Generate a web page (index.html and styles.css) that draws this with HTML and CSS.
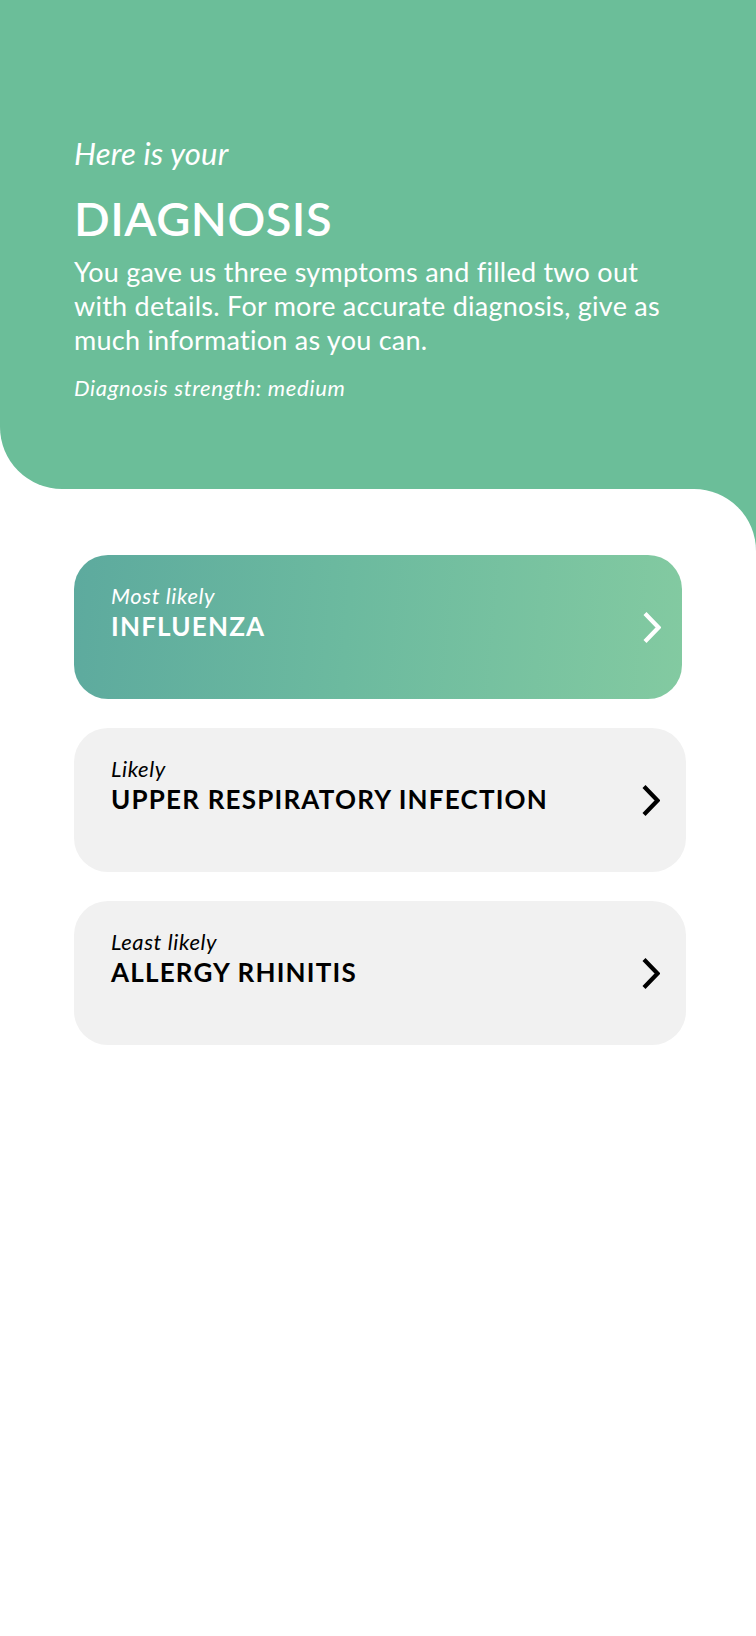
FILE: index.html
```html
<!DOCTYPE html>
<html>
<head>
    <meta charset="utf-8">
    <title>Diagnosis</title>
    <link rel="stylesheet" href="styles.css">
</head>
<body>
    <div class="header">
        <div class="intro">Here is your</div>
        <h1>DIAGNOSIS</h1>
        <p class="summary">You gave us three symptoms and filled two out with details. For more accurate diagnosis, give as much information as you can.</p>
        <div class="strength">Diagnosis strength: medium</div>
    </div>
    <div class="main">
        <div class="main_in">
            <a class="card card_top" href="javascript:;">
                <div class="card_txt">
                    <span class="label">Most likely</span>
                    <span class="name">INFLUENZA</span>
                </div>
                <svg class="arrow" viewBox="0 0 18 31"><polyline points="2,1.5 15.5,15.5 2,29.5" /></svg>
            </a>
            <a class="card" href="javascript:;">
                <div class="card_txt">
                    <span class="label">Likely</span>
                    <span class="name">UPPER RESPIRATORY INFECTION</span>
                </div>
                <svg class="arrow" viewBox="0 0 18 31"><polyline points="2,1.5 15.5,15.5 2,29.5" /></svg>
            </a>
            <a class="card" href="javascript:;">
                <div class="card_txt">
                    <span class="label">Least likely</span>
                    <span class="name">ALLERGY RHINITIS</span>
                </div>
                <svg class="arrow" viewBox="0 0 18 31"><polyline points="2,1.5 15.5,15.5 2,29.5" /></svg>
            </a>
        </div>
    </div>
</body>
</html>
```

FILE: styles.css
```css
html, body { margin: 0; padding: 0; background: #fff; }
body { font-family: Lato, "Open Sans", sans-serif; color: #000; }
.header { background: #6bbe99; color: #fff; padding: 135px 40px 88px 74px; border-bottom-left-radius: 62px; }
.intro { font-size: 31px; line-height: 36px; font-style: italic; letter-spacing: 0.2px; }
.header h1 { margin: 19px 0 0 0; font-size: 47px; line-height: 56px; font-weight: 600; letter-spacing: 0.5px; }
.summary { margin: 9px 0 0 0; font-size: 27px; line-height: 34px; letter-spacing: 0.25px; max-width: 600px; }
.strength { margin-top: 18px; font-size: 22px; line-height: 26px; font-style: italic; letter-spacing: 0.7px; }
.main { background: #6bbe99; }
.main_in { background: #fff; border-top-right-radius: 62px; padding: 66px 70px 600px 74px; display: flex; flex-direction: column; gap: 29px; }
.card { display: flex; justify-content: space-between; align-items: flex-start; height: 144px; box-sizing: border-box; padding: 28px 26px 0 37px; background: #f1f1f1; border-radius: 34px; text-decoration: none; color: #000; }
.card_top { margin-right: 4px; padding-right: 21px; background: linear-gradient(95deg, #5daa9e 0%, #6cba9f 45%, #83caa1 100%); color: #fff; }
.card_txt { display: flex; flex-direction: column; }
.label { font-size: 22px; line-height: 26px; font-style: italic; letter-spacing: 0.6px; }
.name { margin-top: 2px; font-size: 26px; line-height: 30px; font-weight: bold; letter-spacing: 1.2px; }
.arrow { width: 18px; height: 31px; align-self: center; margin-top: -28px; fill: none; stroke: currentColor; stroke-width: 4.2; }
```
